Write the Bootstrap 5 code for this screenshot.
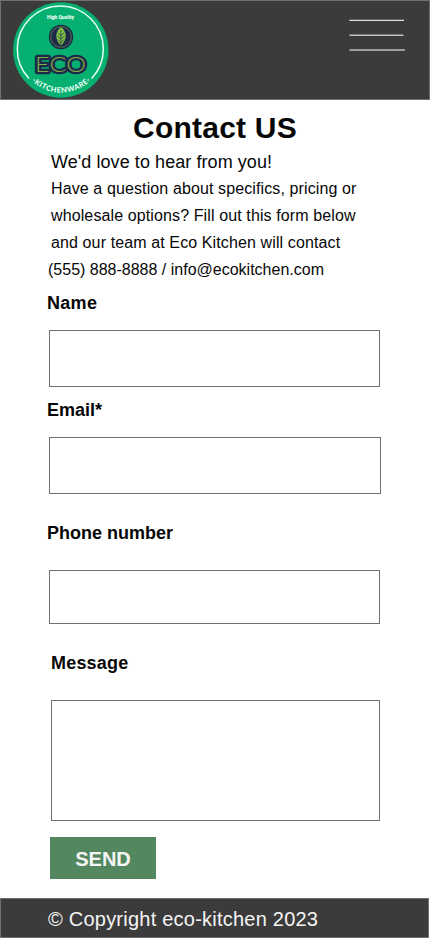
<!DOCTYPE html>
<html lang="en">
<head>
<meta charset="utf-8">
<meta name="viewport" content="width=device-width, initial-scale=1">
<title>Eco Kitchen - Contact</title>
<link href="https://cdn.jsdelivr.net/npm/bootstrap@5.3.0/dist/css/bootstrap.min.css" rel="stylesheet">
<style>
body{font-family:"Liberation Sans",Arial,sans-serif;color:#070707;background:#fff;line-height:27px;overflow-x:hidden}
.site-head{height:100px;background:#3b3b3b;border:1px solid #707070;padding:0 24px 0 11px}
.site-logo{width:98px;height:98px;display:block}
.menu-btn{margin-top:17px;line-height:0}
.page-title{font-size:30px;line-height:36px;font-weight:700;margin-top:10px;margin-bottom:2px;letter-spacing:.22px;white-space:nowrap}
.intro{padding-left:51px;font-size:16px;letter-spacing:.115px;white-space:nowrap}
.intro-lead{font-size:18px;letter-spacing:.07px;line-height:26px;padding-top:1px}
.contact-line{margin-left:-3px;letter-spacing:0}
.contact-form{padding-left:49px;padding-top:6px}
.contact-form .form-label{display:block;font-size:18px;font-weight:700;line-height:26px;padding-top:1px;margin:0 0 14px -2px}
.contact-form .form-control{width:331px;height:57px;border:1px solid #707070;border-radius:0;margin-bottom:9px;resize:none}
.contact-form .f-email{width:332px;margin-bottom:25px}
.contact-form .f-phone{height:54px;margin-bottom:25px}
.contact-form .lbl-name{letter-spacing:.3px}
.contact-form .lbl-wide{margin-bottom:24px}
.contact-form .lbl-msg{margin-left:2px;letter-spacing:.2px}
.contact-form .f-msg{width:329px;height:121px;margin:0 0 16px 2px}
.send-btn{width:106px;height:42px;margin-left:1px;background:#52875f;color:#f5f5f5;border:0;border-radius:0;font-size:20px;font-weight:700;line-height:40px;padding:2px 0 0}
.send-btn:hover{background:#467552;color:#f5f5f5}
.site-foot{width:429px;height:40px;margin-top:19px;background:#3b3b3b;border:1px solid #707070;color:#f5f5f5;font-size:20px;line-height:40px;letter-spacing:.23px;padding-left:47px;white-space:nowrap}
</style>
<script src="https://cdn.jsdelivr.net/npm/bootstrap@5.3.0/dist/js/bootstrap.bundle.min.js"></script>
</head>
<body>
<header class="site-head d-flex justify-content-between align-items-start">
  <a href="#" aria-label="Home">
    <svg class="site-logo" viewBox="12 1 98 98">
      <circle cx="60.800" cy="50" r="47.700" fill="#05b070"/>
      <path d="M29 78.500A43 43 0 1 1 91.600 78.500" fill="none" stroke="#eafff5" stroke-width="1.500"/>
      <text x="47" y="19" font-family="Roboto" font-weight="900" font-size="4.900" fill="#eafff5" textLength="27">High Quality</text>
      <circle cx="61" cy="37" r="12.200" fill="#1e2a4a"/>
      <circle cx="61" cy="37" r="10.300" fill="none" stroke="#77a844" stroke-width=".6"/>
      <path d="M61 27.200C66.500 31 68 38.500 61 45.800C54 38.500 55.500 31 61 27.200Z" fill="#82c341"/>
      <path d="M61 30V46.500M61 35.500L58 33M61 35.500L64 33M61 39L57.500 36M61 39L64.500 36M61 42.500L58 39.500M61 42.500L64 39.500" fill="none" stroke="#1e2a4a" stroke-width=".7"/>
      <text transform="translate(35 71.500) scale(1.160 1)" font-family="Lato" font-weight="300" font-size="21.500" textLength="44" fill="#7fae44" stroke="#1e2a4a" stroke-width="4.600" stroke-linejoin="round" paint-order="stroke">ECO</text>
      <path id="arc" d="M30 79A42 42 0 0 0 92 79" fill="none"/>
      <text font-family="Lato" font-weight="900" font-size="7.400" fill="#eafff5"><textPath href="#arc" startOffset="3" textLength="64">·KITCHENWARE·</textPath></text>
    </svg>
  </a>
  <button class="menu-btn btn p-0 border-0" type="button" aria-label="Menu">
    <svg width="56" height="34" viewBox="349 18 56 34"><path d="M349.500 20.300H404" stroke="#e0e0e0" stroke-width="1.200"/><path d="M349.500 35.200H403.500" stroke="#c4c4c4" stroke-width="1.500"/><path d="M349.500 50H405" stroke="#9c9c9c" stroke-width="2"/></svg>
  </button>
</header>
<main>
  <h1 class="page-title text-center">Contact US</h1>
  <div class="intro">
    <div class="intro-lead">We'd love to hear from you!</div>
    <div>Have a question about specifics, pricing or</div>
    <div>wholesale options? Fill out this form below</div>
    <div>and our team at Eco Kitchen will contact</div>
    <div class="contact-line">(555) 888-8888 / info@ecokitchen.com</div>
  </div>
  <form class="contact-form">
    <label class="form-label lbl-name" for="n">Name</label>
    <input id="n" type="text" class="form-control">
    <label class="form-label" for="e">Email*</label>
    <input id="e" type="email" class="form-control f-email">
    <label class="form-label lbl-wide" for="p">Phone number</label>
    <input id="p" type="tel" class="form-control f-phone">
    <label class="form-label lbl-wide lbl-msg" for="m">Message</label>
    <textarea id="m" class="form-control f-msg"></textarea>
    <button type="button" class="btn send-btn d-block">SEND</button>
  </form>
</main>
<footer class="site-foot">© Copyright eco-kitchen 2023</footer>
</body>
</html>
